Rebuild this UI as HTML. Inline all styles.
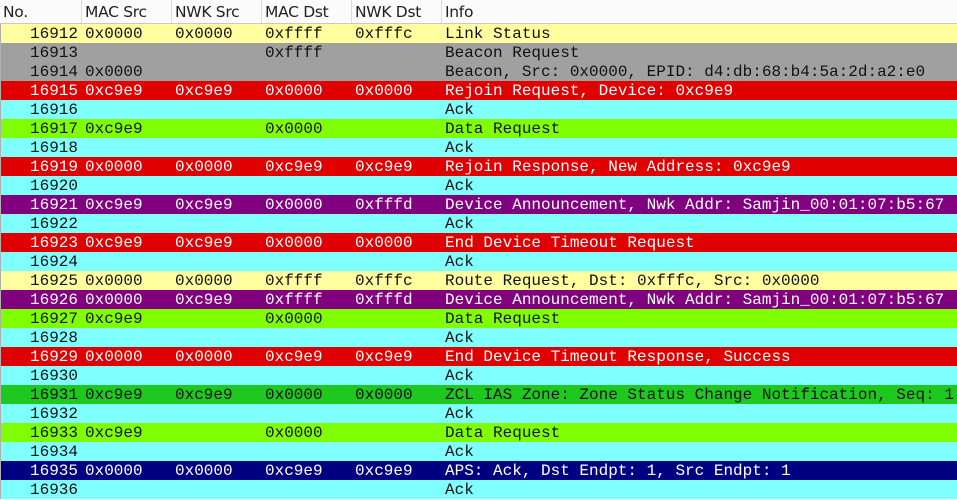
<!DOCTYPE html><html><head><style>
body{margin:0;width:957px;height:499px;overflow:hidden;background:#fff;}
.h{height:23px;border-bottom:1px solid #c8c8c8;background:#fbfbfb;position:relative;font:15.5px "DejaVu Sans","Liberation Sans",sans-serif;color:#222;}
.h span{position:absolute;top:0;height:23px;line-height:24px;padding-left:3px;border-right:1px solid #dcdcdc;box-sizing:border-box;letter-spacing:-0.3px}
.r{height:19px;position:relative;font:16px "Liberation Mono",monospace;line-height:19px;color:#111;border-left:1px solid #b0b0b0;box-sizing:border-box;white-space:pre}
.r span{position:absolute;top:1px}
.n{right:879px}
.a{left:84px}.b{left:174px}.c{left:264px}.d{left:354px}.i{left:444px}
.y{background:#ffffa0}.g{background:#a0a0a0}.R{background:#e00000;color:#fff}.C{background:#80ffff}.L{background:#80ff00}.P{background:#800080;color:#fff}.G{background:#1ec81e}.N{background:#000080;color:#fff}
</style></head><body>
<div class="h"><span style="left:0;width:82px">No.</span><span style="left:82px;width:90px">MAC Src</span><span style="left:172px;width:90px">NWK Src</span><span style="left:262px;width:90px">MAC Dst</span><span style="left:352px;width:90px">NWK Dst</span><span style="left:442px;width:515px;border:none">Info</span></div>
<div class="r y"><span class="n">16912</span><span class="a">0x0000</span><span class="b">0x0000</span><span class="c">0xffff</span><span class="d">0xfffc</span><span class="i">Link Status</span></div>
<div class="r g"><span class="n">16913</span><span class="c">0xffff</span><span class="i">Beacon Request</span></div>
<div class="r g"><span class="n">16914</span><span class="a">0x0000</span><span class="i">Beacon, Src: 0x0000, EPID: d4:db:68:b4:5a:2d:a2:e0</span></div>
<div class="r R"><span class="n">16915</span><span class="a">0xc9e9</span><span class="b">0xc9e9</span><span class="c">0x0000</span><span class="d">0x0000</span><span class="i">Rejoin Request, Device: 0xc9e9</span></div>
<div class="r C"><span class="n">16916</span><span class="i">Ack</span></div>
<div class="r L"><span class="n">16917</span><span class="a">0xc9e9</span><span class="c">0x0000</span><span class="i">Data Request</span></div>
<div class="r C"><span class="n">16918</span><span class="i">Ack</span></div>
<div class="r R"><span class="n">16919</span><span class="a">0x0000</span><span class="b">0x0000</span><span class="c">0xc9e9</span><span class="d">0xc9e9</span><span class="i">Rejoin Response, New Address: 0xc9e9</span></div>
<div class="r C"><span class="n">16920</span><span class="i">Ack</span></div>
<div class="r P"><span class="n">16921</span><span class="a">0xc9e9</span><span class="b">0xc9e9</span><span class="c">0x0000</span><span class="d">0xfffd</span><span class="i">Device Announcement, Nwk Addr: Samjin_00:01:07:b5:67</span></div>
<div class="r C"><span class="n">16922</span><span class="i">Ack</span></div>
<div class="r R"><span class="n">16923</span><span class="a">0xc9e9</span><span class="b">0xc9e9</span><span class="c">0x0000</span><span class="d">0x0000</span><span class="i">End Device Timeout Request</span></div>
<div class="r C"><span class="n">16924</span><span class="i">Ack</span></div>
<div class="r y"><span class="n">16925</span><span class="a">0x0000</span><span class="b">0x0000</span><span class="c">0xffff</span><span class="d">0xfffc</span><span class="i">Route Request, Dst: 0xfffc, Src: 0x0000</span></div>
<div class="r P"><span class="n">16926</span><span class="a">0x0000</span><span class="b">0xc9e9</span><span class="c">0xffff</span><span class="d">0xfffd</span><span class="i">Device Announcement, Nwk Addr: Samjin_00:01:07:b5:67</span></div>
<div class="r L"><span class="n">16927</span><span class="a">0xc9e9</span><span class="c">0x0000</span><span class="i">Data Request</span></div>
<div class="r C"><span class="n">16928</span><span class="i">Ack</span></div>
<div class="r R"><span class="n">16929</span><span class="a">0x0000</span><span class="b">0x0000</span><span class="c">0xc9e9</span><span class="d">0xc9e9</span><span class="i">End Device Timeout Response, Success</span></div>
<div class="r C"><span class="n">16930</span><span class="i">Ack</span></div>
<div class="r G"><span class="n">16931</span><span class="a">0xc9e9</span><span class="b">0xc9e9</span><span class="c">0x0000</span><span class="d">0x0000</span><span class="i">ZCL IAS Zone: Zone Status Change Notification, Seq: 1</span></div>
<div class="r C"><span class="n">16932</span><span class="i">Ack</span></div>
<div class="r L"><span class="n">16933</span><span class="a">0xc9e9</span><span class="c">0x0000</span><span class="i">Data Request</span></div>
<div class="r C"><span class="n">16934</span><span class="i">Ack</span></div>
<div class="r N"><span class="n">16935</span><span class="a">0x0000</span><span class="b">0x0000</span><span class="c">0xc9e9</span><span class="d">0xc9e9</span><span class="i">APS: Ack, Dst Endpt: 1, Src Endpt: 1</span></div>
<div class="r C"><span class="n">16936</span><span class="i">Ack</span></div>
</body></html>
